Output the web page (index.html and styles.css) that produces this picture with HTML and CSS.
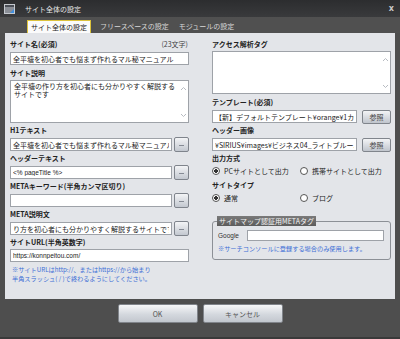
FILE: index.html
```html
<!DOCTYPE html>
<html lang="ja">
<head>
    <meta charset="UTF-8">
    <title>サイト全体の設定</title>
    <link rel="stylesheet" href="styles.css">
</head>
<body>
    <div class="window">
        <div class="titlebar">
            <svg class="app-icon" width="11" height="10" viewBox="0 0 11 10">
                <rect x="0.5" y="0.5" width="10" height="9" fill="#8a8e96" stroke="#c4c8ce"/>
                <rect x="1" y="1" width="9" height="2" fill="#4a4e56"/>
                <path d="M6 9 L10 5 L10 9 Z" fill="#3f8fe0"/>
            </svg>
            <span class="title">サイト全体の設定</span>
            <span class="close">x</span>
        </div>

        <div class="tabs">
            <span class="tab active">サイト全体の設定</span>
            <span class="tab">フリースペースの設定</span>
            <span class="tab">モジュールの設定</span>
        </div>

        <div class="panel">
            <!-- 左カラム -->
            <div class="col">
                <div class="label-row">
                    <label>サイト名(必須)</label>
                    <span class="count">(23文字)</span>
                </div>
                <input class="text first" type="text" value="全平塘を初心者でも悩まず作れるマル秘マニュアル">

                <label>サイト説明</label>
                <div class="area desc">
                    <div class="area-text">全平塘の作り方を初心者にも分かりやすく解説するサイトです</div>
                    <div class="scroll">
                        <svg width="7" height="5" viewBox="0 0 7 5"><path d="M1 4 L3.5 1.5 L6 4" fill="none" stroke="#b8bcc2"/></svg>
                        <svg width="7" height="5" viewBox="0 0 7 5"><path d="M1 1 L3.5 3.5 L6 1" fill="none" stroke="#b8bcc2"/></svg>
                    </div>
                </div>

                <label>H1テキスト</label>
                <div class="row">
                    <input class="text" type="text" value="全平塘を初心者でも悩まず作れるマル秘マニュアル">
                    <button class="more"><span></span></button>
                </div>

                <label>ヘッダーテキスト</label>
                <div class="row">
                    <input class="text latin" type="text" value="<% pageTitle %>">
                    <button class="more"><span></span></button>
                </div>

                <label>METAキーワード(半角カンマ区切り)</label>
                <div class="row">
                    <input class="text" type="text" value="">
                    <button class="more"><span></span></button>
                </div>

                <label>META説明文</label>
                <div class="row">
                    <input class="text" type="text" value="り方を初心者にも分かりやすく解説するサイトです">
                    <button class="more"><span></span></button>
                </div>

                <label>サイトURL(半角英数字)</label>
                <input class="text first latin" type="text" value="https://konnpeitou.com/">
                <p class="note">※サイトURLはhttp://、またはhttps://から始まり</p>
                <p class="note">半角スラッシュ( / )で終わるようにしてください。</p>
            </div>

            <!-- 右カラム -->
            <div class="col">
                <label>アクセス解析タグ</label>
                <div class="area tag">
                    <div class="area-text"></div>
                    <div class="scroll">
                        <svg width="7" height="5" viewBox="0 0 7 5"><path d="M1 4 L3.5 1.5 L6 4" fill="none" stroke="#b8bcc2"/></svg>
                        <svg width="7" height="5" viewBox="0 0 7 5"><path d="M1 1 L3.5 3.5 L6 1" fill="none" stroke="#b8bcc2"/></svg>
                    </div>
                </div>

                <label>テンプレート(必須)</label>
                <div class="row">
                    <input class="text" type="text" value="【新】デフォルトテンプレート¥orange¥1カラム¥">
                    <button class="browse">参照</button>
                </div>

                <label>ヘッダー画像</label>
                <div class="row">
                    <input class="text" type="text" value="¥SIRIUS¥images¥ビジネス04_ライトブルー.jpg">
                    <button class="browse">参照</button>
                </div>

                <label>出力方式</label>
                <div class="radios">
                    <span class="radio checked">PCサイトとして出力</span>
                    <span class="radio">携帯サイトとして出力</span>
                </div>

                <label>サイトタイプ</label>
                <div class="radios">
                    <span class="radio checked">通常</span>
                    <span class="radio">ブログ</span>
                </div>

                <fieldset class="sitemap">
                    <legend>サイトマップ認証用METAタグ</legend>
                    <div class="google">
                        <span class="g-label">Google</span>
                        <input class="text" type="text" value="">
                    </div>
                    <p class="note">※サーチコンソールに登録する場合のみ使用します。</p>
                </fieldset>
            </div>
        </div>

        <div class="footer">
            <button class="big">OK</button>
            <button class="big">キャンセル</button>
        </div>
    </div>
</body>
</html>
```

FILE: styles.css
```css
body {
    margin: 0;
    font-family: "Noto Sans CJK JP", "Noto Sans", sans-serif;
    font-size: 7px;
    color: #222;
}

.window {
    width: 400px;
    height: 339px;
    background: #4e4e4e;
    display: flex;
    flex-direction: column;
    overflow: hidden;
}

/* タイトルバー */
.titlebar {
    height: 17px;
    display: flex;
    align-items: center;
    padding: 0 6px 0 4px;
    background: linear-gradient(#2c2d2f, #393a3c);
    color: #e8e8e8;
}

.app-icon {
    flex: none;
}

.title {
    margin-left: 10px;
    flex: 1;
}

.close {
    color: #c8c8c8;
    font-family: "DejaVu Sans", sans-serif;
    font-weight: bold;
    font-size: 8px;
}

/* タブ */
.tabs {
    height: 16px;
    display: flex;
    align-items: flex-end;
    padding-left: 27px;
    background: #505050;
}

.tab {
    height: 13px;
    line-height: 12px;
    padding: 0 4px;
    margin-right: 2px;
    color: #d8d8d8;
    box-sizing: border-box;
}

.tab.active {
    background: #fbfbfb;
    color: #222;
    border: 1px solid #dcc23c;
    border-bottom: none;
    padding: 0 3px;
    margin-right: 5px;
}

/* メインパネル */
.panel {
    height: 266px;
    box-sizing: border-box;
    margin: 0 5px;
    padding: 6px 4px 0 5px;
    background: #e3e5e9;
    display: grid;
    grid-template-columns: 179px 179px;
    column-gap: 23px;
    align-items: start;
}

.col {
    display: flex;
    flex-direction: column;
}

label,
legend {
    display: block;
    height: 10px;
    line-height: 10px;
    font-weight: bold;
    margin-bottom: 2px;
}

.label-row {
    display: flex;
    justify-content: space-between;
    margin-bottom: 3px;
}

.label-row label {
    margin-bottom: 0;
}

.count {
    line-height: 10px;
    color: #444;
    padding-right: 1px;
}

.text {
    height: 13px;
    box-sizing: border-box;
    border: 1px solid #9ea2a8;
    background: #fff;
    padding: 0 2px;
    margin: 0;
    font-family: inherit;
    font-size: 7px;
    color: #222;
    min-width: 0;
    outline: none;
}

.text.latin {
    font-family: "Liberation Sans", sans-serif;
    font-size: 6.5px;
}

.text.first {
    margin-bottom: 3px;
}

.area {
    display: flex;
    box-sizing: border-box;
    border: 1px solid #9ea2a8;
    background: #fff;
}

.area.desc {
    height: 43px;
    margin-bottom: 2px;
}

.area.tag {
    height: 43px;
    margin-bottom: 3px;
}

.area-text {
    flex: 1;
    padding: 1px 3px;
    line-height: 8px;
}

.scroll {
    width: 10px;
    display: flex;
    flex-direction: column;
    justify-content: space-between;
    align-items: center;
    padding: 5px 0 4px;
}

.row {
    display: flex;
    align-items: center;
    gap: 2px;
    height: 15px;
    margin-bottom: 1px;
}

.row .text {
    flex: 1;
}

button {
    font-family: inherit;
    padding: 0;
    margin: 0;
    cursor: pointer;
}

.more {
    width: 15px;
    height: 15px;
    flex: none;
    border: 1px solid #7f848c;
    border-radius: 2px;
    background: linear-gradient(#f3f4f6, #c3c8d0);
    display: flex;
    align-items: center;
    justify-content: center;
}

.more span {
    width: 5px;
    height: 1px;
    margin-top: 2px;
    background: #858a94;
}

.browse {
    width: 29px;
    height: 14px;
    flex: none;
    margin-left: 3px;
    border: 1px solid #80858c;
    border-radius: 2px;
    background: linear-gradient(#f3f4f6, #c0c5cd);
    font-size: 7px;
    color: #444;
}

.radios {
    display: flex;
    height: 12px;
    align-items: center;
    margin-bottom: 3px;
}

.radio {
    width: 88px;
    display: flex;
    align-items: center;
    gap: 4px;
}

.radio::before {
    content: "";
    width: 6px;
    height: 6px;
    border: 1px solid #555;
    border-radius: 50%;
    background: #fff;
}

.radio.checked::before {
    background: radial-gradient(circle, #333 0 1.6px, #fff 2px);
}

.sitemap {
    margin: 9px 0 0;
    padding: 0 6px 6px 5px;
    border: 1px solid #8c9096;
    border-radius: 3px;
}

.sitemap legend {
    margin: 0 0 0 -1px;
    padding: 0 2px;
    background: linear-gradient(#7a7a7a, #5c5c5c);
    color: #f4f4f4;
    font-weight: normal;
}

.google {
    display: flex;
    align-items: center;
    margin-top: 4px;
}

.g-label {
    width: 29px;
    font-family: "Liberation Sans", sans-serif;
    font-size: 6.5px;
    color: #333;
}

.google .text {
    flex: 1;
    height: 11px;
}

.note {
    margin: 0 0 0 2px;
    height: 9px;
    line-height: 9px;
    font-size: 6.2px;
    color: #3c6ed6;
    white-space: nowrap;
}

.sitemap .note {
    margin: 3px 0 0 0;
}

/* フッターボタン */
.footer {
    flex: 1;
    display: flex;
    justify-content: center;
    gap: 5px;
    padding-top: 5px;
    border-bottom: 2px solid #3a3a3a;
}

.big {
    width: 80px;
    height: 19px;
    border: 1px solid #80848a;
    border-radius: 2px;
    background: linear-gradient(#f6f7f8, #d4d8de 55%, #c2c7ce);
    font-size: 7px;
    color: #555;
}
```
